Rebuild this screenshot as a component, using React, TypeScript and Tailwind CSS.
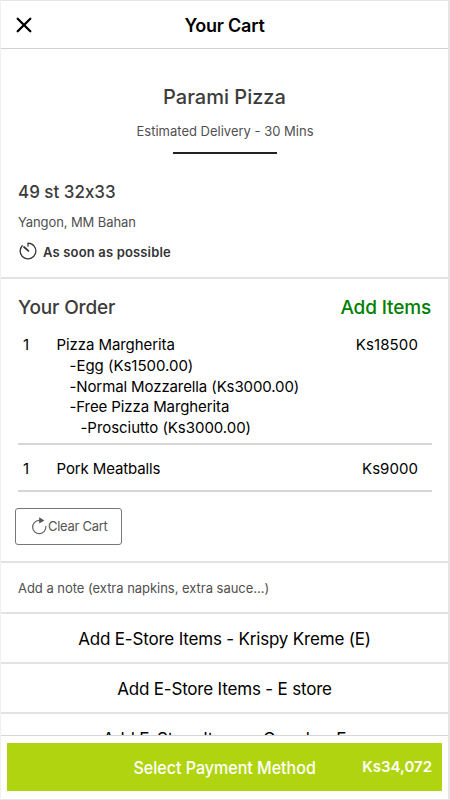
import type { ReactNode } from 'react';

function CloseIcon() {
  return (
    <svg width="16" height="16" viewBox="0 0 16 16" fill="none" stroke="#000" strokeWidth="2.3" strokeLinecap="round">
      <path d="M1.7 1.7 14.3 14.3M14.3 1.7 1.7 14.3" />
    </svg>
  );
}

function TimerIcon() {
  return (
    <svg className="-mt-[3px]" width="18" height="18" viewBox="0 0 18 18" fill="none" stroke="#333" strokeWidth="1.3" strokeLinecap="round">
      <path d="M9 1.2V4M9 1.2A7.8 7.8 0 1 1 3.2 3.8" />
      <path d="M5 5 9.4 8.9" strokeWidth="1.8" />
    </svg>
  );
}

function RefreshIcon() {
  return (
    <svg width="16" height="18" viewBox="0 0 16 18" fill="none" stroke="#666" strokeWidth="1.2" strokeLinecap="round">
      <path d="M10 3.4H8A6.6 6.6 0 1 0 14.8 9.4" />
      <path d="M8.2 0.2 13.4 3.4 8.2 6.6Z" fill="#555" stroke="none" />
    </svg>
  );
}

function StoreRow({ children }: { children: ReactNode }) {
  return (
    <button className="flex h-[50px] w-full shrink-0 items-start justify-center border-b-2 border-[#e2e2e2] pt-[13px] text-[17px] leading-6 tracking-[-0.185px] text-black">
      {children}
    </button>
  );
}

export default function App() {
  return (
    <div className="flex h-[800px] w-[450px] flex-col overflow-hidden border border-r-2 border-[#e5e5e5] border-l-[#f0f0f0] bg-white font-['Inter',sans-serif] whitespace-nowrap text-black [font-feature-settings:'calt'_0]">
      <header className="grid h-12 shrink-0 grid-cols-[60px_1fr_60px] items-center border-b border-[#d2d2d2]">
        <button className="pl-[15px]" aria-label="Close"><CloseIcon /></button>
        <h1 className="pt-[2px] text-center text-[18px] leading-6 font-semibold tracking-[-0.225px]">Your Cart</h1>
      </header>

      <main className="flex min-h-0 flex-1 flex-col overflow-hidden">
        <section className="h-[230px] shrink-0 border-b-2 border-[#e2e2e2] pt-[34px] text-[#3c3c3c]">
          <div className="flex flex-col items-center">
            <h2 className="text-[20px] leading-[28px] font-medium">Parami Pizza</h2>
            <p className="mt-[10px] pl-px text-[13px] leading-5 text-[#505050]">Estimated Delivery - 30 Mins</p>
            <div className="mt-[11px] h-[2px] w-[104px] bg-[#222]" />
          </div>
          <div className="pl-[17px]">
            <h3 className="mt-[25px] origin-left scale-x-[0.97] text-[17.5px] leading-[26px] font-medium">49 st 32x33</h3>
            <p className="mt-[7px] text-[13px] leading-5 tracking-[-0.1px] text-[#505050]">Yangon, MM Bahan</p>
            <div className="mt-[10px] flex h-5 items-center pl-px text-[13px] leading-5 font-semibold tracking-[0.162px] text-[#333]">
              <TimerIcon />
              <span className="ml-[6px]">As soon as possible</span>
            </div>
          </div>
        </section>

        <section className="h-[284px] shrink-0 border-b-2 border-[#e2e2e2] pt-[17px]">
          <div className="flex h-6 justify-between pr-[17px] pl-[17px] text-[19px] leading-6 font-medium">
            <h3 className="tracking-[-0.14px] text-[#3c3c3c]">Your Order</h3>
            <button className="tracking-[-0.144px] text-[#008000]">Add Items</button>
          </div>
          <div className="mr-[16px] ml-[17px] text-[15px] leading-[20.6px]">
            <div className="flex h-[125px] border-b-2 border-[#d6d6d6] pt-[15.4px]">
              <span className="w-[38.5px] pl-[5px]">1</span>
              <div className="flex-1">
                <p className="tracking-[-0.08px]">Pizza Margherita</p>
                <p className="pl-[13px] tracking-[-0.02px]">-Egg (Ks1500.00)</p>
                <p className="pl-[13px] tracking-[-0.11px]">-Normal Mozzarella (Ks3000.00)</p>
                <p className="pl-[13px] tracking-[-0.1px]">-Free Pizza Margherita</p>
                <p className="pl-[24px] tracking-[-0.04px]">-Prosciutto (Ks3000.00)</p>
              </div>
              <span className="pr-[14px] tracking-[0.12px]">Ks18500</span>
            </div>
            <div className="flex h-[47px] border-b-2 border-[#d6d6d6] pt-[14px]">
              <span className="w-[38.5px] pl-[5px]">1</span>
              <span className="flex-1 tracking-[-0.12px]">Pork Meatballs</span>
              <span className="pr-[14px] tracking-[0.05px]">Ks9000</span>
            </div>
          </div>
          <button className="mt-4 ml-[14px] flex h-[37px] w-[107px] items-center rounded-[3px] border border-[#777] pb-px pl-[15px] text-[13px] tracking-[-0.28px] text-[#555]">
            <RefreshIcon />
            <span className="ml-px leading-5">Clear Cart</span>
          </button>
        </section>

        <p className="h-[51px] shrink-0 border-b-2 border-[#e2e2e2] pl-[17px] text-[13px] leading-[50px] tracking-[-0.03px] text-[#505050]">
          Add a note (extra napkins, extra sauce...)
        </p>
        <StoreRow>Add E-Store Items - Krispy Kreme (E)</StoreRow>
        <StoreRow>Add E-Store Items - E store</StoreRow>
        <StoreRow>Add E-Store Items - Google - E</StoreRow>
      </main>

      <footer className="h-[64px] shrink-0 border-t border-[#d6d6d6] px-[6px] pt-[7px]">
        <button className="grid h-[48px] w-full grid-cols-[1fr_181px_1fr] items-center bg-[#b0d510] text-white">
          <span className="col-start-2 flex justify-center pt-px pl-px">
            <span className="scale-x-[0.943] text-[17px] leading-6 font-medium">Select Payment Method</span>
          </span>
          <span className="pr-[10px] text-right text-[15px] leading-6 font-semibold">Ks34,072</span>
        </button>
      </footer>
    </div>
  );
}
